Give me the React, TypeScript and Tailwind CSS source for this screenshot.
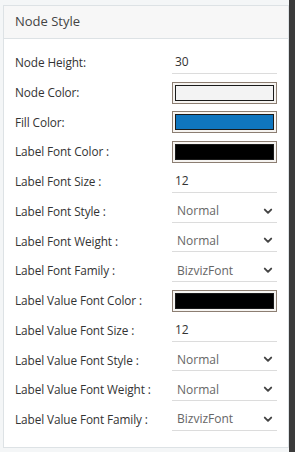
import React from "react";

type Row =
  | { label: string; kind: "text"; value: string }
  | { label: string; kind: "color"; color: string }
  | { label: string; kind: "select"; value: string };

const rows: Row[] = [
  { label: "Node Height:", kind: "text", value: "30" },
  { label: "Node Color:", kind: "color", color: "#f3f3f3" },
  { label: "Fill Color:", kind: "color", color: "#0f76bf" },
  { label: "Label Font Color :", kind: "color", color: "#000000" },
  { label: "Label Font Size :", kind: "text", value: "12" },
  { label: "Label Font Style :", kind: "select", value: "Normal" },
  { label: "Label Font Weight :", kind: "select", value: "Normal" },
  { label: "Label Font Family :", kind: "select", value: "BizvizFont" },
  { label: "Label Value Font Color :", kind: "color", color: "#000000" },
  { label: "Label Value Font Size :", kind: "text", value: "12" },
  { label: "Label Value Font Style :", kind: "select", value: "Normal" },
  { label: "Label Value Font Weight :", kind: "select", value: "Normal" },
  { label: "Label Value Font Family :", kind: "select", value: "BizvizFont" },
];

function Chevron() {
  return (
    <svg width="10" height="7" viewBox="0 0 10 7" className="mr-[4px]">
      <path d="M1.8 1.6 L5 4.8 L8.2 1.6" fill="none" stroke="#444" strokeWidth="1.9" strokeLinecap="round" strokeLinejoin="round" />
    </svg>
  );
}

export default function App() {
  return (
    <div
      className="relative flex h-[452px] w-[295px] overflow-hidden bg-[#f4f6f7] text-[#333]"
      style={{ fontFamily: "'Open Sans', 'Liberation Sans', sans-serif" }}
    >
      <div className="ml-[3px] mt-[5px] flex h-[443px] w-[286px] flex-col border border-[#dde2e5] bg-white">
        <div className="flex h-[33px] items-center border-b border-[#dde2e5] bg-[#f7f7f7] pl-[11px] text-[13px] text-[#444]">
          Node Style
        </div>
        <div className="flex flex-col pt-[9px]">
          {rows.map((r) => (
            <div key={r.label} className="flex h-[29.75px] items-center pl-[11px]">
              <div className="w-[157px] text-[11.8px] tracking-[-0.1px] text-[#333]">{r.label}</div>
              {r.kind === "text" && (
                <div className="flex h-[22px] w-[105px] items-center border-b border-[#dcdcdc] pl-[3px] text-[12px] text-[#333]">
                  {r.value}
                </div>
              )}
              {r.kind === "select" && (
                <div className="flex h-[22px] w-[105px] items-center justify-between border-b border-[#dcdcdc] pl-[5px] text-[12px] text-[#666]">
                  <span>{r.value}</span>
                  <Chevron />
                </div>
              )}
              {r.kind === "color" && (
                <div className="flex h-[22px] w-[105px] border border-[#8c7e72] bg-[#f6f4f1] p-[2px]">
                  <div className="flex-1 border border-[#1a1a1a]" style={{ backgroundColor: r.color }} />
                </div>
              )}
            </div>
          ))}
        </div>
      </div>
      <div className="absolute right-0 top-0 h-[452px] w-[6px] bg-[#3b3b3b]" />
    </div>
  );
}
